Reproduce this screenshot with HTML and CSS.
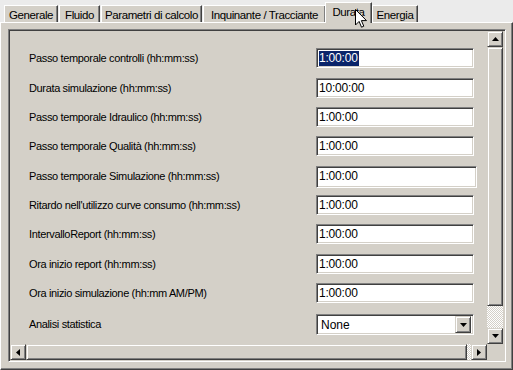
FILE: index.html
```html
<!DOCTYPE html>
<html>
<head>
<meta charset="utf-8">
<link rel="stylesheet" href="styles.css">
</head>
<body>
<div class="win">
  <div class="tabs">
    <div class="tab t1">Generale</div>
    <div class="tab t2">Fluido</div>
    <div class="tab t3">Parametri di calcolo</div>
    <div class="tab t4">Inquinante / Tracciante</div>
    <div class="tab sel">Durata</div>
    <div class="tab t6">Energia</div>
  </div>
  <div class="panel">
    <div class="view">
      <div class="content">
        <div class="rows">
          <div class="row r30"><span class="lbl">Passo temporale controlli (hh:mm:ss)</span><div class="inp"><span class="hl">1:00:00</span></div></div>
          <div class="row r29"><span class="lbl">Durata simulazione (hh:mm:ss)</span><div class="inp">10:00:00</div></div>
          <div class="row r29"><span class="lbl">Passo temporale Idraulico (hh:mm:ss)</span><div class="inp">1:00:00</div></div>
          <div class="row r30"><span class="lbl">Passo temporale Qualità (hh:mm:ss)</span><div class="inp">1:00:00</div></div>
          <div class="row r29"><span class="lbl">Passo temporale Simulazione (hh:mm:ss)</span><div class="inp wide">1:00:00</div></div>
          <div class="row r29"><span class="lbl">Ritardo nell'utilizzo curve consumo (hh:mm:ss)</span><div class="inp">1:00:00</div></div>
          <div class="row r30"><span class="lbl">IntervalloReport (hh:mm:ss)</span><div class="inp">1:00:00</div></div>
          <div class="row r29"><span class="lbl">Ora inizio report (hh:mm:ss)</span><div class="inp">1:00:00</div></div>
          <div class="row r31"><span class="lbl">Ora inizio simulazione (hh:mm AM/PM)</span><div class="inp">1:00:00</div></div>
          <div class="row r29"><span class="lbl">Analisi statistica</span><div class="combo"><span class="ctext">None</span><span class="btn cbtn"><svg width="7" height="4" viewBox="0 0 7 4"><path d="M0 0h7L3.5 4z" fill="#000"/></svg></span></div></div>
        </div>
        <div class="hscroll">
          <span class="btn sbtn"><svg width="4" height="7" viewBox="0 0 4 7"><path d="M4 0v7L0 3.5z" fill="#000"/></svg></span>
          <span class="btn hthumb"></span>
          <span class="hatch hhatch"></span>
          <span class="btn sbtn"><svg width="4" height="7" viewBox="0 0 4 7"><path d="M0 0v7L4 3.5z" fill="#000"/></svg></span>
        </div>
      </div>
      <div class="vscroll">
        <span class="btn vbtn"><svg width="7" height="4" viewBox="0 0 7 4"><path d="M0 4h7L3.5 0z" fill="#000"/></svg></span>
        <span class="btn vthumb"></span>
        <span class="hatch vhatch"></span>
        <span class="btn vbtn"><svg width="7" height="4" viewBox="0 0 7 4"><path d="M0 0h7L3.5 4z" fill="#000"/></svg></span>
        <span class="corner"></span>
      </div>
    </div>
  </div>
  <svg class="cursor" width="12" height="20" viewBox="0 0 12 20"><path d="M0.5 0.5v15.5l3.6-3.6 2.4 5.8 2.3-1-2.4-5.6h5.1z" fill="#fff" stroke="#000" stroke-width="1"/></svg>
</div>
</body>
</html>
```

FILE: styles.css
```css
* { box-sizing: border-box; }
html, body { margin: 0; padding: 0; }
body {
  width: 513px;
  height: 370px;
  background: #ebebeb;
  font-family: "Liberation Sans", Arial, sans-serif;
  font-size: 11px;
  color: #000;
  overflow: hidden;
}
.win { position: relative; width: 513px; height: 370px; }
.tabs {
  display: flex;
  align-items: flex-end;
  height: 22px;
  padding-left: 4px;
}
.tab {
  height: 17px;
  background: #d4d0c8;
  border-top: 1px solid #fff;
  border-left: 1px solid #fff;
  border-right: 1px solid #404040;
  box-shadow: inset -1px 0 0 #808080;
  display: flex;
  align-items: center;
  justify-content: center;
  padding-top: 1px;
  margin-right: 1px;
  font-size: 11.5px;
  letter-spacing: -0.4px;
  white-space: nowrap;
}
.t1 { width: 54px; }
.t2 { width: 41px; }
.t3 { width: 101px; }
.t4 { width: 123px; margin-right: 0; }
.tab.sel {
  width: 47px;
  height: 21px;
  margin-bottom: -1px;
  margin-left: -1px;
  margin-right: 0;
  position: relative;
  z-index: 2;
  padding-bottom: 3px;
}
.t6 { width: 46px; }
.panel {
  height: 348px;
  background: #d4d0c8;
  border-top: 1px solid #fff;
  border-left: 1px solid #fff;
  border-right: 1px solid #404040;
  border-bottom: 1px solid #404040;
  box-shadow: inset -1px -1px 0 #808080, inset 1px 1px 0 #d4d0c8;
  padding: 6px 6px 6px 7px;
}
.view {
  display: flex;
  height: 333px;
  border-top: 1px solid #808080;
  border-left: 1px solid #808080;
  border-right: 1px solid #fff;
  border-bottom: 1px solid #fff;
  box-shadow: inset 1px 1px 0 #404040, inset -1px -1px 0 #d4d0c8;
  padding: 1px;
}
.content {
  width: 477px;
  display: flex;
  flex-direction: column;
}
.rows {
  height: 313px;
  padding-top: 17px;
  display: flex;
  flex-direction: column;
}
.row {
  display: flex;
  align-items: flex-start;
  flex: none;
}
.r29 { height: 29px; }
.r30 { height: 30px; }
.r31 { height: 31px; }
.lbl {
  width: 306px;
  padding-left: 19px;
  line-height: 20px;
  white-space: nowrap;
  letter-spacing: -0.35px;
}
.inp {
  width: 158px;
  height: 20px;
  background: #fff;
  border-top: 1px solid #808080;
  border-left: 1px solid #808080;
  border-right: 1px solid #fff;
  border-bottom: 1px solid #fff;
  box-shadow: inset 1px 1px 0 #404040, inset -1px -1px 0 #d4d0c8;
  padding: 2px 2px 0 2px;
  line-height: 15px;
  font-size: 12px;
  letter-spacing: -0.2px;
}
.inp.wide { width: 161px; height: 22px; margin-top: 0; }
.hl { background: #0a246a; color: #fff; display: inline-block; padding: 0 1px 0 0; }
.combo {
  width: 158px;
  height: 21px;
  background: #fff;
  border-top: 1px solid #808080;
  border-left: 1px solid #808080;
  border-right: 1px solid #fff;
  border-bottom: 1px solid #fff;
  box-shadow: inset 1px 1px 0 #404040, inset -1px -1px 0 #d4d0c8;
  padding: 2px;
  display: flex;
  align-items: center;
  justify-content: space-between;
  font-size: 12px;
}
.ctext { padding-left: 2px; }
.btn {
  display: flex;
  align-items: center;
  justify-content: center;
  background: #d4d0c8;
  border-top: 1px solid #d4d0c8;
  border-left: 1px solid #d4d0c8;
  border-right: 1px solid #404040;
  border-bottom: 1px solid #404040;
  box-shadow: inset 1px 1px 0 #fff, inset -1px -1px 0 #808080;
  flex: none;
}
.cbtn { width: 16px; height: 17px; }
.hscroll {
  height: 16px;
  display: flex;
}
.sbtn { width: 16px; height: 16px; }
.hthumb { width: 441px; height: 16px; }
.hatch {
  background-color: #fff;
  background-image: repeating-conic-gradient(#d4d0c8 0 25%, #fff 0 50%);
  background-size: 2px 2px;
}
.hhatch { width: 4px; height: 16px; }
.vscroll {
  width: 16px;
  display: flex;
  flex-direction: column;
}
.vbtn { width: 16px; height: 16px; }
.vthumb { width: 16px; height: 259px; }
.vhatch { width: 16px; height: 22px; }
.corner { height: 16px; background: #d4d0c8; }
.cursor { position: absolute; left: 355px; top: 9px; z-index: 5; }
```
